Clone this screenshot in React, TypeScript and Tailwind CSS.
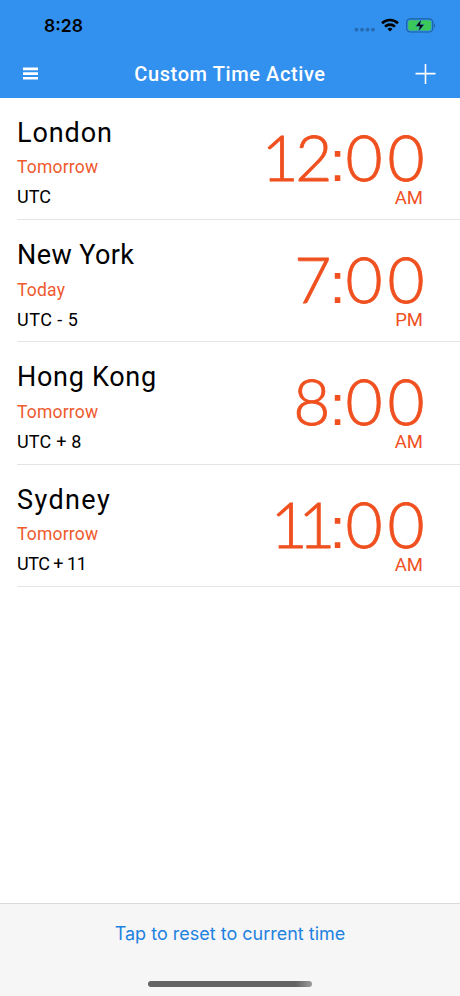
type City = {
  name: string;
  day: string;
  offset: string;
  time: string;
  period: string;
  nameTracking: string;
  offsetTracking: string;
};

const cities: City[] = [
  { name: "London", day: "Tomorrow", offset: "UTC", time: "12:00", period: "AM", nameTracking: "tracking-[0.9px]", offsetTracking: "tracking-normal" },
  { name: "New York", day: "Today", offset: "UTC - 5", time: "7:00", period: "PM", nameTracking: "tracking-[0.4px]", offsetTracking: "tracking-[0.5px]" },
  { name: "Hong Kong", day: "Tomorrow", offset: "UTC + 8", time: "8:00", period: "AM", nameTracking: "tracking-[0.7px]", offsetTracking: "tracking-[0.2px]" },
  { name: "Sydney", day: "Tomorrow", offset: "UTC + 11", time: "11:00", period: "AM", nameTracking: "tracking-[1.4px]", offsetTracking: "tracking-[-0.5px]" },
];

const glyphSpacing: Record<string, string> = {
  "0": "mx-[2.4px]",
  "1": "-ml-[6px] -mr-[3.5px]",
  "2": "mr-[-0.5px]",
  "7": "mr-[0.5px]",
  "8": "mr-[1.5px]",
  ":": "-mx-[2.4px] font-['Liberation_Sans'] text-[58px] [-webkit-text-stroke:0px]",
};

function StatusBar() {
  return (
    <div className="flex h-[50px] items-center justify-between pl-11 pr-[24px] text-black">
      <span className="pt-[2px] font-['Inter'] text-[17.5px] font-semibold leading-none">8:28</span>
      <div className="flex items-center">
        <svg width="22" height="16" viewBox="0 0 22 16" fill="#246bb4">
          <circle cx="3.5" cy="12.7" r="1.9" />
          <circle cx="9" cy="12.7" r="1.9" />
          <circle cx="14.5" cy="12.7" r="1.9" />
          <circle cx="20" cy="12.7" r="1.9" />
        </svg>
        <svg className="ml-1.5" width="18" height="14" viewBox="0 0 18 14" fill="none" stroke="currentColor" strokeWidth="2.6">
          <path d="M1 5.3a11.4 11.4 0 0 1 16 0" />
          <path d="M4 8.7a7.1 7.1 0 0 1 10 0" />
          <path d="M9 13.4 6.5 11a3.6 3.6 0 0 1 5 0z" fill="currentColor" stroke="none" />
        </svg>
        <svg className="ml-[7px]" width="30" height="16" viewBox="0 0 30 16">
          <rect x="0.7" y="1.8" width="26" height="13.2" rx="3.6" fill="none" stroke="#1d5fa3" strokeWidth="1.2" />
          <rect x="2.2" y="3.3" width="23" height="10.2" rx="2.2" fill="#3cc75b" />
          <path d="M28 6.2c1.4.6 1.4 4 0 4.6z" fill="#1d5fa3" />
          <path d="M15.2 2.4 9.6 9.3h4l-1.1 5.3 5.7-7.1h-4z" fill="#000" stroke="#3291ee" strokeWidth="0.5" />
        </svg>
      </div>
    </div>
  );
}

function NavBar() {
  return (
    <div className="flex h-12 items-center justify-between pl-[23px] pr-[24px] text-white">
      <button type="button" aria-label="Menu">
        <svg width="15" height="14" viewBox="0 0 15 14" fill="currentColor">
          <path d="M0 .6h15v2.6H0zM0 5.3h15v2.6H0zM0 10h15v2.6H0z" />
        </svg>
      </button>
      <h1 className="pl-[7px] text-[20px] font-medium leading-none tracking-[0.6px]">Custom Time Active</h1>
      <button type="button" aria-label="Add city">
        <svg width="21" height="20" viewBox="0 0 21 20" stroke="currentColor" strokeWidth="1.6">
          <path d="M10.5 0v20M.5 9.6h20" />
        </svg>
      </button>
    </div>
  );
}

function CityRow({ city }: { city: City }) {
  return (
    <li className="ml-[17px] flex h-[122.2px] justify-between border-b border-[#e4e4e6] pr-[37px]">
      <div className="pt-[19px]">
        <h2 className={`text-[27px] leading-8 ${city.nameTracking}`}>{city.name}</h2>
        <p className="mt-[3.4px] text-[17.5px] leading-[30px] tracking-[0.2px] text-[#ee5a2e]">{city.day}</p>
        <p className={`text-[18px] leading-[30px] ${city.offsetTracking}`}>{city.offset}</p>
      </div>
      <div className="pt-[32px] text-right text-[#f0501f]">
        <p className="-mr-[4px] font-['Lato'] text-[64px] font-light leading-[54px] [-webkit-text-stroke:0.8px_#f0501f]">
          {city.time.split("").map((char, i) => (
            <span key={i} className={glyphSpacing[char]}>{char}</span>
          ))}
        </p>
        <p className="-mt-[5px] text-[18.5px] leading-[30px]">{city.period}</p>
      </div>
    </li>
  );
}

export default function App() {
  return (
    <div className="flex h-[996px] w-[460px] flex-col overflow-hidden bg-white font-['Roboto','Liberation_Sans',sans-serif] text-black">
      <header className="h-[98px] bg-[#3291ee]">
        <StatusBar />
        <NavBar />
      </header>

      <ul className="flex-1">
        {cities.map((city) => (
          <CityRow key={city.name} city={city} />
        ))}
      </ul>

      <footer className="flex h-[93px] flex-col items-center justify-between border-t border-[#dbdbdc] bg-[#f7f6f7] pb-[9px] pt-[15px]">
        <button type="button" className="font-['Inter'] text-[18px] leading-[30px] text-[#1e82df]">
          Tap to reset to current time
        </button>
        <div className="h-[6px] w-[164px] rounded-full bg-linear-to-r from-[#636363] from-90% to-[#9a9a9a]" />
      </footer>
    </div>
  );
}
